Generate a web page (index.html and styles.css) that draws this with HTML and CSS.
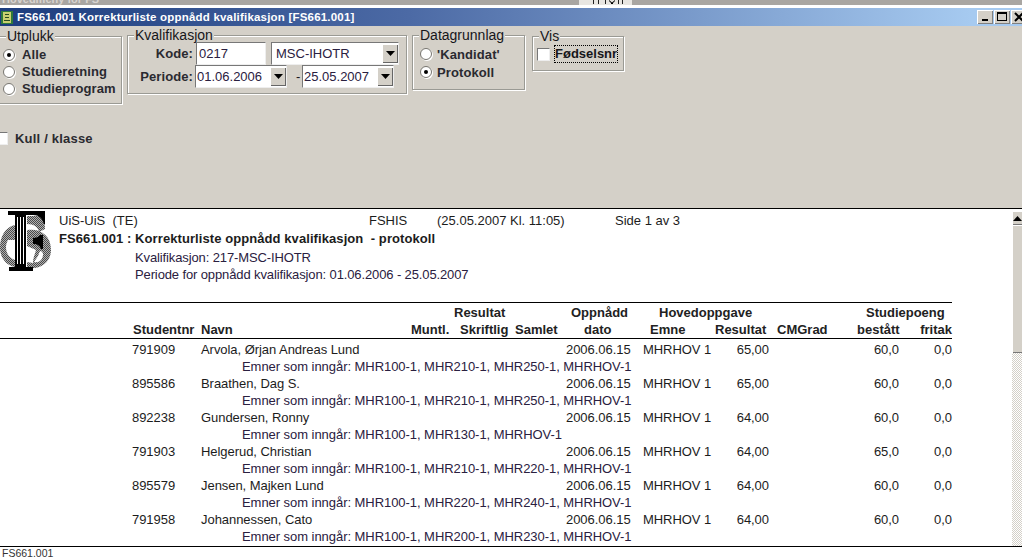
FILE: index.html
```html
<!DOCTYPE html>
<html lang="no">
<head>
<meta charset="utf-8">
<title>FS661.001</title>
<link rel="stylesheet" href="styles.css">
</head>
<body>
<div class="desktop">
  <span class="desktop-text">Hovedmeny for FS</span>
  <svg class="desktop-marks" width="53" height="5" viewBox="0 0 53 5"><rect width="53" height="5" fill="#e8e6e2"/><rect x="14" width="1" height="4" fill="#222"/><rect x="19" width="1" height="4" fill="#222"/><rect x="26" width="1" height="4" fill="#222"/><path d="M30 0l3 2.500 3-2.500v1l-2 2v1h-2v-1l-2-2z" fill="#000"/><rect x="39" width="1" height="4" fill="#222"/><rect x="43" width="1" height="4" fill="#222"/></svg>
</div>
<header class="titlebar">
  <svg class="app-icon" width="12" height="13" viewBox="0 0 12 13"><rect width="12" height="13" fill="#2f7a3a"/><rect x="2" y="1" width="8" height="11" fill="#c8d070"/><rect x="4" y="3" width="4" height="1" fill="#2a4a20"/><rect x="4" y="6" width="4" height="1" fill="#2a4a20"/><rect x="3" y="9" width="6" height="1" fill="#2a4a20"/></svg>
  <h1 class="title">FS661.001 Korrekturliste oppnådd kvalifikasjon [FS661.001]</h1>
  <div class="win-buttons">
    <span class="win-btn"><svg width="14" height="12" viewBox="0 0 14 12"><rect x="4" y="8" width="6" height="2" fill="#000"/></svg></span>
    <span class="win-btn"><svg width="14" height="12" viewBox="0 0 14 12"><rect x="2.500" y="1.500" width="9" height="8" fill="none" stroke="#000"/><rect x="2" y="1" width="10" height="2" fill="#000"/></svg></span>
    <span class="win-btn"><svg width="14" height="12" viewBox="0 0 14 12"><path d="M3 2l8 8M11 2l-8 8" stroke="#000" stroke-width="2"/></svg></span>
  </div>
</header>
<section class="form">
  <div class="groups">
    <fieldset class="group g-utplukk">
      <legend>Utplukk</legend>
      <div class="radio-row"><span class="radio on"></span>Alle</div>
      <div class="radio-row"><span class="radio"></span>Studieretning</div>
      <div class="radio-row"><span class="radio"></span>Studieprogram</div>
    </fieldset>
    <fieldset class="group g-kval">
      <legend>Kvalifikasjon</legend>
      <div class="field-row">
        <span class="field-label">Kode:</span>
        <span class="input i-kode">0217</span>
        <span class="input i-combo">MSC-IHOTR<span class="drop"><svg width="9" height="5" viewBox="0 0 9 5"><path d="M0 0h9L4.500 5z"/></svg></span></span>
      </div>
      <div class="field-row">
        <span class="field-label">Periode:</span>
        <span class="input i-date">01.06.2006<span class="drop"><svg width="9" height="5" viewBox="0 0 9 5"><path d="M0 0h9L4.500 5z"/></svg></span></span>
        <span class="dash">-</span>
        <span class="input i-date2">25.05.2007<span class="drop"><svg width="9" height="5" viewBox="0 0 9 5"><path d="M0 0h9L4.500 5z"/></svg></span></span>
      </div>
    </fieldset>
    <fieldset class="group g-data">
      <legend>Datagrunnlag</legend>
      <div class="radio-row"><span class="radio"></span>'Kandidat'</div>
      <div class="radio-row"><span class="radio on"></span>Protokoll</div>
    </fieldset>
    <fieldset class="group g-vis">
      <legend>Vis</legend>
      <div class="check-row"><span class="check"></span><span class="focus">Fødselsnr</span></div>
    </fieldset>
  </div>
  <div class="kull"><span class="check"></span>Kull / klasse</div>
</section>
<main class="report-wrap">
  <div class="report">
    <div class="report-head">
      <svg class="logo" width="52" height="64" viewBox="0 0 52 64">
        <defs><pattern id="dots" width="2" height="2" patternUnits="userSpaceOnUse"><rect width="2" height="2" fill="#b0b0b0"/><rect width="1" height="1" fill="#4a4a4a"/><rect x="1" y="1" width="1" height="1" fill="#4a4a4a"/></pattern></defs>
        <path d="M15 15C5 17 0 27 0 37c0 10 5 18 15 20v-7c-6-2-9-7-9-13 0-3 1-5 2-7h7z" fill="url(#dots)"/>
        <path d="M27 6h15c2 3 3 8 3 13l-6 3c-1-5-5-8-12-8z" fill="url(#dots)"/>
        <path d="M27 20c13-2 24 5 24 20 0 12-10 20-24 18v-6l6 1c0-5 2-9 3-13l-9-4z" fill="url(#dots)"/>
        <path d="M34 52c5 1 9-2 9-8 0-1-1-3-3-3l-2 5z" fill="#fff"/>
        <path d="M8 1h37v13h-1c-2-6-5-9-11-9h-7v52h7v4H9v-4h6V5H8z" fill="#000"/>
        <path d="M33 28c3 0 6-1 7-3h3v14h-2c-1-3-3-5-8-5z" fill="#000"/>
        <rect x="17" y="7" width="1" height="47" fill="#fff"/><rect x="20" y="7" width="1" height="47" fill="#fff"/><rect x="23" y="7" width="1" height="47" fill="#fff"/>
      </svg>
      <div class="head-text">
        <div class="head-line1"><span class="h-a">UiS-UiS&nbsp; (TE)</span><span class="h-b">FSHIS</span><span class="h-c">(25.05.2007 Kl. 11:05)</span><span>Side 1 av 3</span></div>
        <div class="head-line2">FS661.001 : Korrekturliste oppnådd kvalifikasjon&nbsp; - protokoll</div>
        <div class="head-sub">Kvalifikasjon: 217-MSC-IHOTR</div>
        <div class="head-sub">Periode for oppnådd kvalifikasjon: 01.06.2006 - 25.05.2007</div>
      </div>
    </div>
    <div class="thead">
      <div class="cols-top">
        <span class="c-res-group">Resultat</span>
        <span class="c-dato">Oppnådd</span>
        <span class="c-hov-group">Hovedoppgave</span>
        <span class="c-sp-group">Studiepoeng</span>
      </div>
      <div class="cols-head">
        <span>Studentnr</span><span>Navn</span>
        <span>Muntl.</span><span>Skriftlig</span><span>Samlet</span>
        <span>dato</span><span>Emne</span><span>Resultat</span><span>CMGrad</span>
        <span class="r">bestått</span><span class="r">fritak</span>
      </div>
    </div>
    <div class="tbody">
      <div class="cols"><span>791909</span><span>Arvola, Ørjan Andreas Lund</span><span>2006.06.15</span><span>MHRHOV 1</span><span class="r">65,00</span><span class="r">60,0</span><span class="r">0,0</span></div>
      <div class="emner">Emner som inngår: MHR100-1, MHR210-1, MHR250-1, MHRHOV-1</div>
      <div class="cols"><span>895586</span><span>Braathen, Dag S.</span><span>2006.06.15</span><span>MHRHOV 1</span><span class="r">65,00</span><span class="r">60,0</span><span class="r">0,0</span></div>
      <div class="emner">Emner som inngår: MHR100-1, MHR210-1, MHR250-1, MHRHOV-1</div>
      <div class="cols"><span>892238</span><span>Gundersen, Ronny</span><span>2006.06.15</span><span>MHRHOV 1</span><span class="r">64,00</span><span class="r">60,0</span><span class="r">0,0</span></div>
      <div class="emner">Emner som inngår: MHR100-1, MHR130-1, MHRHOV-1</div>
      <div class="cols"><span>791903</span><span>Helgerud, Christian</span><span>2006.06.15</span><span>MHRHOV 1</span><span class="r">64,00</span><span class="r">65,0</span><span class="r">0,0</span></div>
      <div class="emner">Emner som inngår: MHR100-1, MHR210-1, MHR220-1, MHRHOV-1</div>
      <div class="cols"><span>895579</span><span>Jensen, Majken Lund</span><span>2006.06.15</span><span>MHRHOV 1</span><span class="r">64,00</span><span class="r">60,0</span><span class="r">0,0</span></div>
      <div class="emner">Emner som inngår: MHR100-1, MHR220-1, MHR240-1, MHRHOV-1</div>
      <div class="cols"><span>791958</span><span>Johannessen, Cato</span><span>2006.06.15</span><span>MHRHOV 1</span><span class="r">64,00</span><span class="r">60,0</span><span class="r">0,0</span></div>
      <div class="emner">Emner som inngår: MHR100-1, MHR200-1, MHR230-1, MHRHOV-1</div>
    </div>
  </div>
  <div class="scrollbar">
    <span class="sb-btn"><svg width="9" height="5" viewBox="0 0 9 5"><path d="M0 5h9L4.500 0z"/></svg></span>
    <span class="sb-thumb"></span>
    <span class="sb-track"></span>
  </div>
</main>
<footer class="status">FS661.001</footer>
</body>
</html>
```
FILE: styles.css
```css
* { box-sizing: border-box; }
html, body { margin: 0; padding: 0; }
body {
  width: 1022px; height: 558px; overflow: hidden;
  font-family: "Liberation Sans", Arial, sans-serif;
  font-size: 13px; color: #1c1c1c; background: #fff;
  display: flex; flex-direction: column;
}
.desktop {
  height: 8px; flex: none; overflow: hidden; display: flex; align-items: flex-start;
  background: linear-gradient(#a9a6a2 0, #a9a6a2 5px, #fff 5px);
}
.desktop-text { display: block; margin: -7px 0 0 2px; font: bold 11px/12px "Liberation Sans", sans-serif; color: #d8d4d0; }
.desktop-marks { margin-left: 480px; flex: none; }
.titlebar {
  height: 18px; flex: none; display: flex; align-items: center; padding-left: 1px;
  background: linear-gradient(90deg, #1c3d7e 0, #4c6aa5 40%, #a6caf0 95%);
}
.app-icon { flex: none; }
.title { margin: 0 0 0 4px; font: bold 11.5px/18px "Liberation Sans", sans-serif; color: #fff; white-space: nowrap; letter-spacing: 0.2px; }
.win-buttons { margin-left: auto; display: flex; gap: 1px; margin-right: -5px; }
.win-btn {
  width: 16px; height: 14px; background: #d4d0c8; display: flex; align-items: center; justify-content: center;
  box-shadow: inset 1px 1px #fff, inset -1px -1px #808080;
}
.form { height: 182px; flex: none; background: #d4d0c8; padding-top: 2px; font-size: 13px; }
.groups { display: flex; align-items: flex-start; margin-left: -2px; height: 76px; }
.group {
  margin: 0; padding: 0; min-width: 0; border: 1px solid #9a9a94;
  box-shadow: inset 1px 1px #fff, 1px 1px #fff; font-size: 13px; color: #16161a;
}
.group legend { padding: 0 1px; font-size: 14px; line-height: 15px; background: #d4d0c8; }
.g-utplukk { width: 124px; height: 75px; margin-top: 1px; padding: 2px 0 0 4px; }
.g-utplukk legend { margin-left: 3px; }
.g-kval { width: 280px; height: 66px; margin-left: 5px; padding-left: 10px; }
.g-kval legend { margin-left: -4px; }
.g-data { width: 113px; height: 62px; margin-left: 5px; padding: 2px 0 0 7px; }
.g-data legend { margin-left: -1px; }
.g-data .radio-row { height: 18px; }
.g-vis { width: 92px; height: 42px; margin-left: 7px; margin-top: 1px; padding-left: 5px; }
.g-vis legend { margin-left: 1px; }
.radio-row { height: 17px; display: flex; align-items: center; gap: 7px; font-weight: 700; font-size: 13px; letter-spacing: .1px; color: #2a2a30; }
.g-data .radio-row { gap: 5px; }
.radio {
  width: 12px; height: 12px; border-radius: 50%; background: #fff; flex: none; position: relative;
  border: 1px solid #77756f; box-shadow: 1px 1px 0 #fff;
}
.radio.on::after { content: ""; position: absolute; left: 3px; top: 3px; width: 4px; height: 4px; border-radius: 50%; background: #000; }
.field-row { display: flex; align-items: center; height: 23px; margin-top: -1px; }
.field-row + .field-row { margin-top: 0; }
.field-label { width: 55px; text-align: right; font-weight: 700; letter-spacing: .1px; color: #2a2a30; margin-right: 3px; }
.input {
  height: 23px; background: #fff; display: flex; align-items: center; padding-left: 2px; font-size: 13px; color: #2a2040;
  border: 1px solid; border-color: #777 #eee #eee #777;
}
.i-kode { width: 70px; }
.i-combo { width: 128px; margin-left: 5px; padding-left: 4px; }
.i-date { width: 92px; margin-left: -1px; padding-left: 1px; }
.i-date2 { width: 92px; padding-left: 1px; }
.dash { margin: 0 0 0 9px; width: 6px; }
.drop {
  width: 16px; height: 19px; margin-left: auto; background: #d4d0c8; display: flex; align-items: center; justify-content: center; flex: none;
  box-shadow: inset 1px 1px #fff, inset -1px -1px #666;
}
.check-row { display: flex; align-items: center; gap: 4px; height: 20px; margin-left: -1px; }
.check { width: 13px; height: 13px; background: #fff; flex: none; border: 1px solid; border-color: #777 #eee #eee #777; }
.focus { border: 1px dotted #000; width: 64px; height: 18px; line-height: 16px; overflow: hidden; font-weight: 700; font-size: 13px; white-space: nowrap; }
.kull { margin: 26px 0 0 -5px; display: flex; align-items: center; gap: 7px; font-weight: 700; font-size: 13px; letter-spacing: .2px; color: #2a2a30; height: 16px; }
.report-wrap { flex: none; height: 339px; display: flex; border-top: 1px solid #000; border-bottom: 1px solid #000; }
.report { width: 1012px; flex: none; overflow: hidden; }
.report-head { display: flex; height: 94px; border-bottom: 1px solid #000; width: 952px; }
.logo { flex: none; margin: 1px 0 0 0; }
.head-text { margin-left: 7px; padding-top: 2px; flex: 1; }
.head-line1 { display: flex; height: 19px; line-height: 19px; }
.h-a { width: 310px; }
.h-b { width: 68px; }
.h-c { width: 178px; }
.head-line2 { font-weight: 700; height: 18px; line-height: 18px; letter-spacing: .08px; }
.head-sub { margin-left: 76px; height: 17px; line-height: 20px; color: #2a2040; letter-spacing: -.12px; }
.thead { width: 952px; height: 36px; border-bottom: 1px solid #000; font-weight: 700; padding-top: 1px; color: #222; }
.cols-top { height: 17px; line-height: 17px; display: flex; white-space: nowrap; }
.c-res-group { margin-left: 454px; width: 117px; }
.c-dato { width: 88px; }
.c-hov-group { width: 207px; }
.cols-head, .cols { display: grid; height: 17px; line-height: 17px; padding-left: 132px; white-space: nowrap; }
.cols-head { grid-template-columns: 69px 210px 49px 55px 69px 66px 65px 62px 80px 42px 53px; }
.cols-head > :first-child { margin-left: 1px; }
.r { text-align: right; }
.tbody { padding-top: 2px; }
.cols { grid-template-columns: 69px 365px 77px 72px 54px 130px 53px; width: 952px; letter-spacing: -.05px; }
.emner { height: 17px; line-height: 17px; padding-left: 242px; color: #2a2040; letter-spacing: -.05px; white-space: nowrap; }
.scrollbar { width: 10px; flex: none; display: flex; flex-direction: column; padding-top: 2px; }
.sb-btn { height: 14px; background: #d4d0c8; display: flex; align-items: center; justify-content: center; box-shadow: inset 1px 1px #fff, inset 0 -1px #777; flex: none; }
.sb-thumb { height: 128px; background: #d4d0c8; box-shadow: inset 1px 1px #fff, inset 0 -1px #777; flex: none; }
.sb-track { flex: 1; background: repeating-conic-gradient(#d4d0c8 0 25%, #fff 0 50%) 0 0 / 2px 2px; }
.status { flex: 1; font-size: 10.5px; line-height: 12px; padding-left: 2px; color: #333; }
```
